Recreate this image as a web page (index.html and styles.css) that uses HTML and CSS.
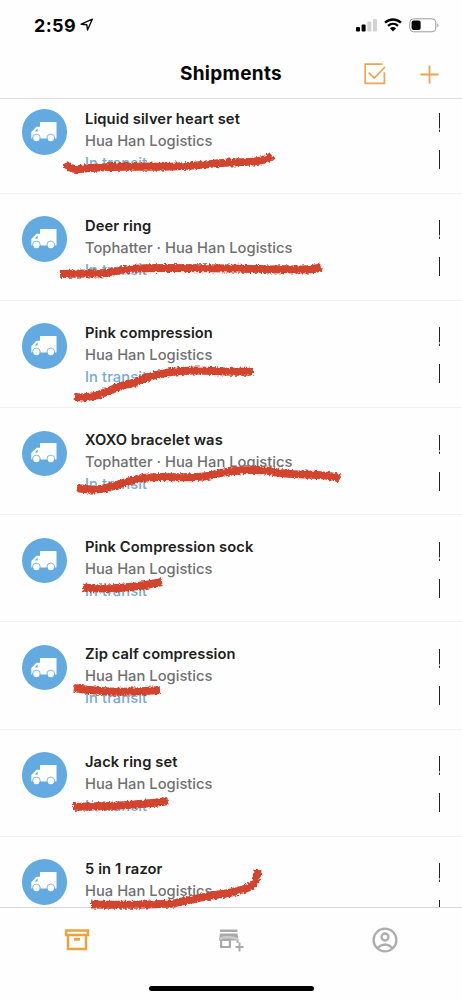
FILE: index.html
```html
<!DOCTYPE html>
<html lang="en">
<head>
<meta charset="utf-8">
<title>Shipments</title>
<link rel="stylesheet" href="styles.css">
</head>
<body>
<svg class="defs" width="0" height="0">
  <symbol id="truck" viewBox="0 0 26 22">
    <path fill="#fff" d="M9 1H25.500V17.500H23.300A4 4 0 0 0 16 17.500H9A4 4 0 0 0 1.500 17.500H.3V11L5.500 5.700H9Z"/>
    <path fill="#62aadf" d="M3.800 10.500 6.600 7.400V10.500Z"/>
    <circle cx="5.400" cy="17.200" r="3.300" fill="#fff"/>
    <circle cx="19.800" cy="17.200" r="3.300" fill="#fff"/>
    <path fill="none" stroke="#62aadf" stroke-width=".8" d="M1.500 17A3.900 3.900 0 1 1 9.300 17A3.900 3.900 0 0 1 1.500 17M15.900 17A3.900 3.900 0 1 1 23.700 17A3.900 3.900 0 0 1 15.900 17"/>
  </symbol>
</svg>
<div class="phone">
  <div class="status-bar">
    <span class="time">2:59</span>
    <svg class="location" width="14" height="14" viewBox="0 0 14 14"><path d="M1.200 6.200 12.300 1.200 7.500 12 6.800 6.700Z" fill="none" stroke="#111" stroke-width="1.400" stroke-linejoin="round"/></svg>
    <svg class="signal" width="22" height="14" viewBox="0 0 22 14"><rect x="0" y="9" width="4" height="4.500" rx="1"/><rect x="5.600" y="6.500" width="4" height="7" rx="1"/><rect x="11.300" y="3.500" width="4" height="10" rx="1" fill="#d2d2d2"/><rect x="17" y="1" width="4" height="12.500" rx="1" fill="#d2d2d2"/></svg>
    <svg class="wifi" width="18" height="14" viewBox="0 0 18 14"><path d="M1 4.700C5.500.4 12.500.4 17 4.700M4 7.900C6.900 5.300 11.100 5.300 14 7.900" fill="none" stroke="#000" stroke-width="2.300"/><path d="M5.900 10.200Q9 7.700 12.100 10.200L9 13.500Z"/></svg>
    <svg class="battery" width="31" height="15" viewBox="0 0 31 15"><rect x=".8" y=".8" width="26" height="13" rx="3.800" fill="#fff" stroke="#9b9b9b"/><rect x="2.600" y="2.600" width="9" height="9.500" rx="2"/><path d="M28.300 5Q30.800 7.300 28.300 9.600Z" fill="#999"/></svg>
  </div>
  <header class="nav">
    <h1>Shipments</h1>
    <svg class="select" width="22" height="22" viewBox="0 0 22 22"><path d="M18.500 1.200H1.200V20.300H20.400V9.300M4.700 9.600 10.300 15 21 4" fill="none" stroke="#eda552" stroke-width="1.700"/></svg>
    <svg class="add" width="19" height="19" viewBox="0 0 19 19"><path d="M9.500.5V18.500M.5 9.500H18.500" stroke="#eda34f" stroke-width="1.800"/></svg>
  </header>
  <main class="list">
    <article class="row"><div class="avatar"><svg><use href="#truck"/></svg></div><div class="info"><h2>Liquid silver heart set</h2><p>Hua Han Logistics</p><p class="state">In transit</p></div><div class="more"><i></i><i></i></div></article>
    <article class="row"><div class="avatar"><svg><use href="#truck"/></svg></div><div class="info"><h2>Deer ring</h2><p>Tophatter · Hua Han Logistics</p><p class="state">In transit</p></div><div class="more"><i></i><i></i></div></article>
    <article class="row"><div class="avatar"><svg><use href="#truck"/></svg></div><div class="info"><h2>Pink compression</h2><p>Hua Han Logistics</p><p class="state">In transit</p></div><div class="more"><i></i><i></i></div></article>
    <article class="row"><div class="avatar"><svg><use href="#truck"/></svg></div><div class="info"><h2>XOXO bracelet was</h2><p>Tophatter · Hua Han Logistics</p><p class="state">In transit</p></div><div class="more"><i></i><i></i></div></article>
    <article class="row"><div class="avatar"><svg><use href="#truck"/></svg></div><div class="info"><h2>Pink Compression sock</h2><p>Hua Han Logistics</p><p class="state">In transit</p></div><div class="more"><i></i><i></i></div></article>
    <article class="row"><div class="avatar"><svg><use href="#truck"/></svg></div><div class="info"><h2>Zip calf compression</h2><p>Hua Han Logistics</p><p class="state">In transit</p></div><div class="more"><i></i><i></i></div></article>
    <article class="row"><div class="avatar"><svg><use href="#truck"/></svg></div><div class="info"><h2>Jack ring set</h2><p>Hua Han Logistics</p><p class="state">In transit</p></div><div class="more"><i></i><i></i></div></article>
    <article class="row"><div class="avatar"><svg><use href="#truck"/></svg></div><div class="info"><h2>5 in 1 razor</h2><p>Hua Han Logistics</p></div><div class="more"><i></i><i></i></div></article>
  </main>
  <footer class="tabs">
    <div class="tab"><svg width="26" height="24" viewBox="0 0 26 24"><g fill="none" stroke="#eca23f" stroke-width="2.500"><path d="M2.100 2.600H23.900V7H2.100ZM4 7V20.900H22V7"/><path d="M10 11.300H16" stroke-width="2.800"/></g></svg></div>
    <div class="tab"><svg width="26" height="24" viewBox="0 0 26 24"><path fill="#aaa" d="M2 1.500H19.500V4H2ZM2 5.500H19.500L20.500 12V15H18.500V12.500H13V20H2V12.500H1V11Z"/><path fill="#ccc" d="M1.300 9.500Q11 6.500 20 10V12.300Q11 9 1.300 12Z"/><path fill="#fff" d="M4.200 13H10.800V18H4.200Z"/><path d="M21.500 14.500V23.500M17.500 19H25.500" stroke="#aaa" stroke-width="2"/></svg></div>
    <div class="tab"><svg width="26" height="26" viewBox="0 0 26 26" fill="none" stroke="#adadad" stroke-width="2.300"><circle cx="13" cy="13" r="11.400"/><circle cx="13" cy="10" r="3.500"/><path d="M5.500 20.800Q13 14.300 20.500 20.800"/></svg></div>
  </footer>
  <div class="home"></div>
  <svg class="marks" width="462" height="1000" viewBox="0 0 462 1000">
    <filter id="crayon" filterUnits="userSpaceOnUse" x="0" y="100" width="462" height="830">
      <feTurbulence type="fractalNoise" baseFrequency=".45" numOctaves="2" seed="4" result="noise"/>
      <feDisplacementMap in="SourceGraphic" in2="noise" scale="4.500" xChannelSelector="R" yChannelSelector="G"/>
      <feGaussianBlur stdDeviation=".35"/>
    </filter>
    <g filter="url(#crayon)">
      <path d="M66 163Q69 170 80 169C102 166 120 167 147 166.500C190 168 210 163 230 162.500C253 162 264 162 272 155.500"/>
      <path d="M60 274C85 273 94 274 107 273C124 268 143 268 165 268C200 268 234 268 270 269.500C293 268 310 272 321 267"/>
      <path d="M74 397C100 400 107 388 133 383C150 376 163 372 180 371C205 369 228 373 253 371.500"/>
      <path d="M77 488C108 494 122 480 147 477.500C168 476 186 479 208 476C230 470 250 469 270 471C288 477 325 472 340 478.500"/>
      <path d="M83 587.500C110 590 138 587 162 582"/>
      <path d="M74 688C105 693 137 692 160 690"/>
      <path d="M73 807C108 806 136 806 168 801"/>
      <path d="M91 904.500C120 905 145 905 173 903.500C196 899 210 895 229 893C246 889 254 887 255.500 880Q257 877 257.500 870"/>
    </g>
  </svg>
</div>
</body>
</html>
```

FILE: styles.css
```css
* { box-sizing: border-box; }
body, h1, h2, p { margin: 0; }
body { background: #fefefe; font-family: Inter, "Liberation Sans", sans-serif; }
svg { display: block; flex: none; }
.defs { position: absolute; }
.phone { position: relative; width: 462px; height: 1000px; overflow: hidden; display: flex; flex-direction: column; }
.status-bar { height: 50px; padding: 0 24px 0 34px; display: flex; align-items: center; }
.time { font-size: 18px; font-weight: 700; color: #080808; width: 46px; letter-spacing: .35px; }
.location { margin-right: auto; }
.signal { margin-right: 6px; }
.wifi { margin-right: 7px; }
.battery { margin-right: -1.500px; }
.nav { height: 49px; flex: none; border-bottom: 1px solid #dedede; display: grid; grid-template-columns: 1fr auto auto; align-items: center; padding: 0 23px 0 180px; }
.nav h1 { font-size: 19px; line-height: 24px; font-weight: 700; color: #080808; letter-spacing: .3px; }
.select { margin-right: 34px; }
.list { height: 808px; flex: none; overflow: hidden; }
.row { height: 107.15px; padding: 22.500px 21px 0 21.500px; display: flex; border-bottom: 1px solid #f0f0f0; }
.row:first-child { margin-top: -12.300px; }
.avatar { width: 45.500px; height: 45.500px; border-radius: 50%; background: #62aadf; display: flex; align-items: center; justify-content: center; flex: none; }
.avatar svg { width: 26px; height: 22px; }
.info { margin-left: 18px; flex: 1; font-size: 14.700px; line-height: 22px; white-space: nowrap; }
.info h2 { font-size: 14.700px; line-height: 22px; margin-top: -1.500px; font-weight: 600; color: #202020; letter-spacing: .1px; }
.info p { font-weight: 500; color: #707070; letter-spacing: .03px; }
.info .state { color: #76abd0; letter-spacing: .1px; }
.more { width: 2px; margin-top: 4px; display: flex; flex-direction: column; gap: 18px; }
.more i { display: block; width: 1.300px; height: 19px; background: #222; }
.more i:first-child { background: linear-gradient(#222 15px, #aaa 15px 17px, #333 17px); }
.tabs { height: 64px; flex: none; border-top: 1px solid #d6d6d6; display: grid; grid-template-columns: repeat(3, 154px); }
.tab { display: flex; align-items: center; justify-content: center; }
.home { width: 165px; height: 5.500px; border-radius: 3px; background: #000; margin: 14.500px 0 0 148.500px; flex: none; }
.marks { position: absolute; left: 0; top: 0; pointer-events: none; }
.marks path { fill: none; stroke: #d23e27; stroke-width: 8; stroke-opacity: .97; stroke-linejoin: round; stroke-linecap: butt; }
```
